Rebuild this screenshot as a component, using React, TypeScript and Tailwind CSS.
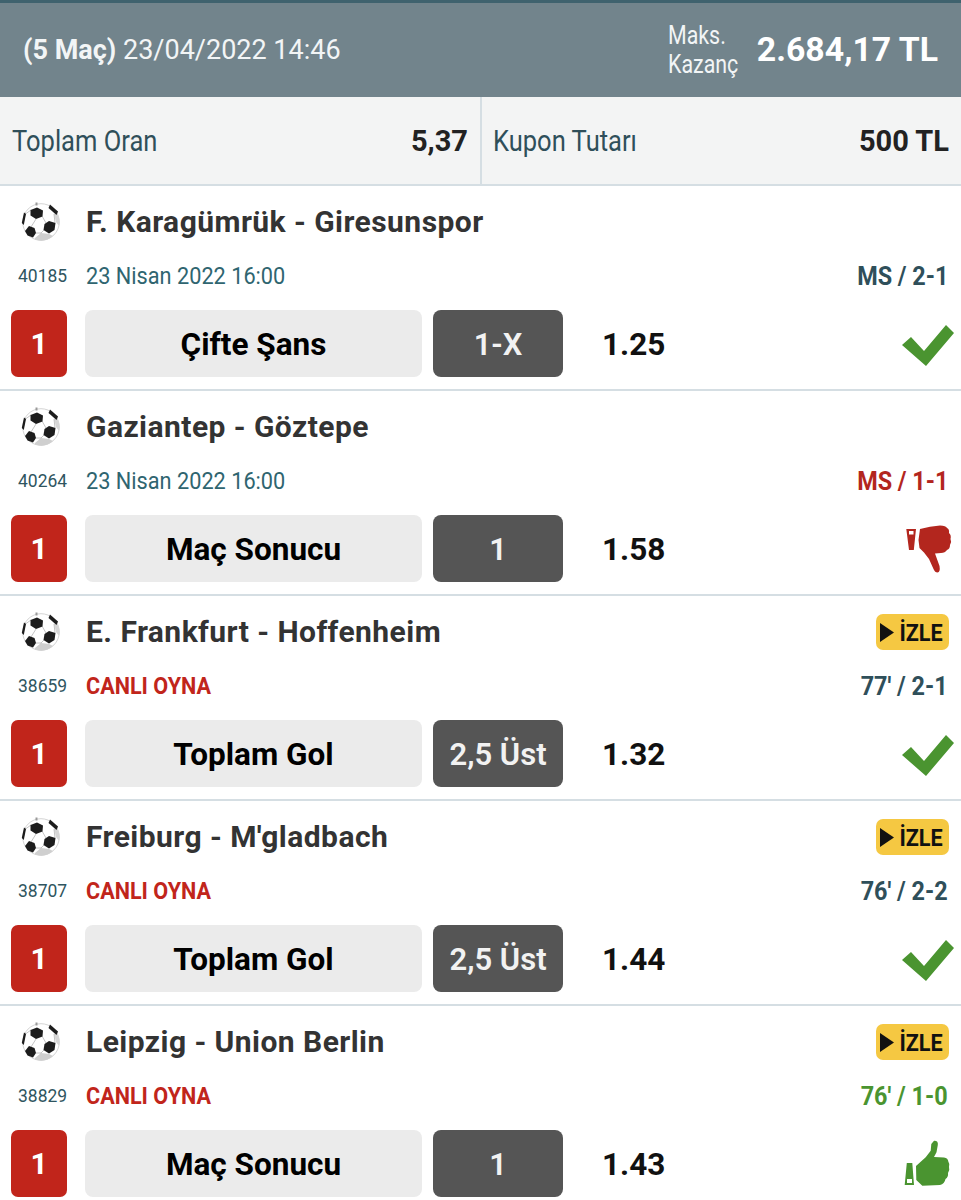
import React from "react";

type Match = {
  title: string;
  code: string;
  date?: string;
  market: string;
  pick: string;
  odd: string;
  score: string;
  scoreColor: string;
  live?: boolean;
  result: "check" | "down" | "up";
};

const matches: Match[] = [
  { title: "F. Karagümrük - Giresunspor", code: "40185", date: "23 Nisan 2022 16:00", market: "Çifte Şans", pick: "1-X", odd: "1.25", score: "MS / 2-1", scoreColor: "text-[#2f4f5a]", result: "check" },
  { title: "Gaziantep - Göztepe", code: "40264", date: "23 Nisan 2022 16:00", market: "Maç Sonucu", pick: "1", odd: "1.58", score: "MS / 1-1", scoreColor: "text-[#b3261e]", result: "down" },
  { title: "E. Frankfurt - Hoffenheim", code: "38659", live: true, market: "Toplam Gol", pick: "2,5 Üst", odd: "1.32", score: "77' / 2-1", scoreColor: "text-[#2f4f5a]", result: "check" },
  { title: "Freiburg - M'gladbach", code: "38707", live: true, market: "Toplam Gol", pick: "2,5 Üst", odd: "1.44", score: "76' / 2-2", scoreColor: "text-[#2f4f5a]", result: "check" },
  { title: "Leipzig - Union Berlin", code: "38829", live: true, market: "Maç Sonucu", pick: "1", odd: "1.43", score: "76' / 1-0", scoreColor: "text-[#4a9430]", result: "up" },
];

function Ball() {
  return (
    <svg width="40" height="40" viewBox="0 0 40 40">
      <circle cx="20" cy="20" r="18.3" fill="#fff" stroke="#c9c9c9" strokeWidth="0.8" />
      {/* shaded lower edge */}
      <path d="M14 36 L20 31 L28 32 L32 34 A18.3 18.3 0 0 1 14 37.5 Z" fill="#cfcfcf" />
      <path d="M36 11 A18.3 18.3 0 0 1 38 24 L35 20 L33 12 Z" fill="#d6d6d6" />
      {/* seams */}
      <path d="M21 14 L25 21 M15 17 L10 25 M23 28 L20 31 L15 31 M33 12 L34 21 M10 8 L3 13" stroke="#b5b5b5" strokeWidth="0.8" fill="none" />
      <polygon points="16,5.5 22,8.5 21.5,14.5 15,17 9.5,13.5 9.5,8" fill="#1c1c1c" />
      <polygon points="28,19 34.5,21 33.5,28 28,31.5 22.5,28 23.5,22" fill="#1c1c1c" />
      <polygon points="8,24 13.5,26 15,31 12,35.5 6.5,33.5 4,29" fill="#1c1c1c" />
      <path d="M29 2.5 L37 9.5 L35.5 13 L27.5 6 Z" fill="#1c1c1c" />
      <path d="M3 10.5 L0.8 21 L2.8 23 L5 12 Z" fill="#1c1c1c" />
      <path d="M14.5 0.5 h2 v3 h-2 z" fill="#999" />
    </svg>
  );
}

function Check() {
  return (
    <svg className="mr-[1px] mt-[3px]" width="52" height="41" viewBox="0 0 52 41">
      <path d="M0 20 L9 12 L22 26 L44 0 L52 8 L24 41 Z" fill="#4a9430" />
    </svg>
  );
}

function ThumbDown() {
  return (
    <svg className="mr-[3px]" width="46" height="48" viewBox="0 -1 46 48">
      <path
        fillRule="evenodd"
        d="M0.3 3 L10 3 L7.8 24 L3 24 Z M3 5 L3 8.5 L7.5 8.5 L7.5 5 Z"
        fill="#b3261e"
      />
      <path
        d="M14 3 Q24 0 34 -0.5 Q40 -0.5 41 2 Q43.5 3 43 7 Q45.5 9 44.5 13 Q46 16 44 19 Q44 23 41 24 Q39 27 35 27 L29 27.5 L33.5 40 Q34.5 46 31.5 46.5 Q29 46.5 27.5 43 L23 33 L18 26.5 L13.5 22 L12.5 14 Z"
        fill="#b3261e"
      />
    </svg>
  );
}

function ThumbUp() {
  return (
    <svg className="mr-[5px]" width="46" height="47" viewBox="0 0 46 47">
      <path
        fillRule="evenodd"
        d="M2.8 23 L8.3 23 L10 45 L0.7 45 Z M3 39 L3 43 L8 43 L8 39 Z"
        fill="#4a9430"
      />
      <path
        d="M30 0.7 Q34.5 0.5 33.8 5 L32.5 12.3 L30 17 L40 17.5 Q44 18 44.3 21.5 Q46 24 45 27 Q46 30 44 33 Q44.5 37 41.5 39 Q40.5 44 36 45 L18.3 45.7 L12.3 40 L12 26 L21.7 17.3 L26.7 10.7 L27.3 4 Z"
        fill="#4a9430"
      />
    </svg>
  );
}

function Izle() {
  return (
    <div className="flex h-[36px] w-[73px] items-center justify-center gap-[3px] rounded-[7px] bg-[#f5c842]">
      <svg width="14" height="19" viewBox="0 0 14 19">
        <path d="M0 0 L14 9.5 L0 19 Z" fill="#111" />
      </svg>
      <span className="scale-x-[0.9] pt-[1px] text-[24px] font-bold leading-none text-[#111]">İZLE</span>
    </div>
  );
}

function Row({ m }: { m: Match }) {
  return (
    <div className="border-b-2 border-[#d5dee3] bg-white pb-[12px] last:border-b-0">
      <div className="flex h-[72px] items-center justify-between pl-[21px] pr-[12px]">
        <div className="flex items-center gap-[25px]">
          <Ball />
          <span className="text-[30px] font-bold leading-none tracking-[0.45px] text-[#333]">{m.title}</span>
        </div>
        {m.live && <Izle />}
      </div>
      <div className="flex h-[36px] items-center justify-between pl-[18px] pr-[13px]">
        <div className="flex items-center">
          <span className="w-[68px] origin-left scale-x-[0.92] pt-[1px] text-[19px] text-[#2f5560]">{m.code}</span>
          {m.live ? (
            <span className="origin-left scale-x-[0.9] text-[24px] font-bold text-[#c1251b]">CANLI OYNA</span>
          ) : (
            <span className="origin-left scale-x-[0.905] text-[24px] text-[#2f6570]">{m.date}</span>
          )}
        </div>
        <span className={`origin-right scale-x-[0.9] pt-[1px] text-[26px] font-bold ${m.scoreColor}`}>{m.score}</span>
      </div>
      <div className="mt-[16px] flex h-[67px] items-center pl-[11px] pr-[6px]">
        <div className="flex h-full w-[56px] items-center justify-center rounded-[7px] bg-[#c1251b] text-[30px] font-bold text-white">1</div>
        <div className="ml-[18px] flex h-full w-[337px] items-center justify-center rounded-[8px] bg-[#ebebeb] pt-[3px] text-[31.5px] font-bold text-black">{m.market}</div>
        <div className="ml-[11px] flex h-full w-[130px] items-center justify-center rounded-[8px] bg-[#555] pt-[3px] text-[31px] font-semibold text-[#f2f2f2]">{m.pick}</div>
        <div className="ml-[39px] pt-[3px] text-[31.5px] font-bold text-[#111]">{m.odd}</div>
        <div className="ml-auto flex w-[60px] justify-end">
          {m.result === "check" && <Check />}
          {m.result === "down" && <ThumbDown />}
          {m.result === "up" && <ThumbUp />}
        </div>
      </div>
    </div>
  );
}

export default function App() {
  return (
    <div className="h-[1200px] w-[961px] overflow-hidden bg-white font-['Roboto',sans-serif]">
      <div className="flex h-[97px] items-center justify-between border-t-[3px] border-[#3f626e] bg-[#72848c] pl-[23px] pr-[23px]">
        <div className="text-[27px] text-[#f2f5f6]">
          <span className="font-bold">(5 Maç)</span> 23/04/2022 14:46
        </div>
        <div className="flex items-center">
          <div className="text-[25px] leading-[29px] text-[#f2f5f6]">
            <div className="origin-left scale-x-[0.855]">Maks.</div>
            <div className="origin-left scale-x-[0.855]">Kazanç</div>
          </div>
          <div className="ml-[7px] text-[33.8px] font-bold text-white">2.684,17 TL</div>
        </div>
      </div>
      <div className="flex h-[89px] border-b-2 border-[#d5dee3] bg-[#f3f4f4]">
        <div className="flex w-[482px] items-center justify-between border-r-2 border-[#d5dee3] pl-[12px] pr-[12px]">
          <span className="origin-left scale-x-[0.88] pt-[2px] text-[29px] text-[#2f4f5a]">Toplam Oran</span>
          <span className="pt-[2px] text-[29px] font-bold text-[#222]">5,37</span>
        </div>
        <div className="flex flex-1 items-center justify-between pl-[11px] pr-[12px]">
          <span className="origin-left scale-x-[0.88] pt-[2px] text-[29px] text-[#2f4f5a]">Kupon Tutarı</span>
          <span className="pt-[2px] text-[29px] font-bold text-[#222]">500 TL</span>
        </div>
      </div>
      {matches.map((m) => (
        <Row key={m.code} m={m} />
      ))}
    </div>
  );
}
